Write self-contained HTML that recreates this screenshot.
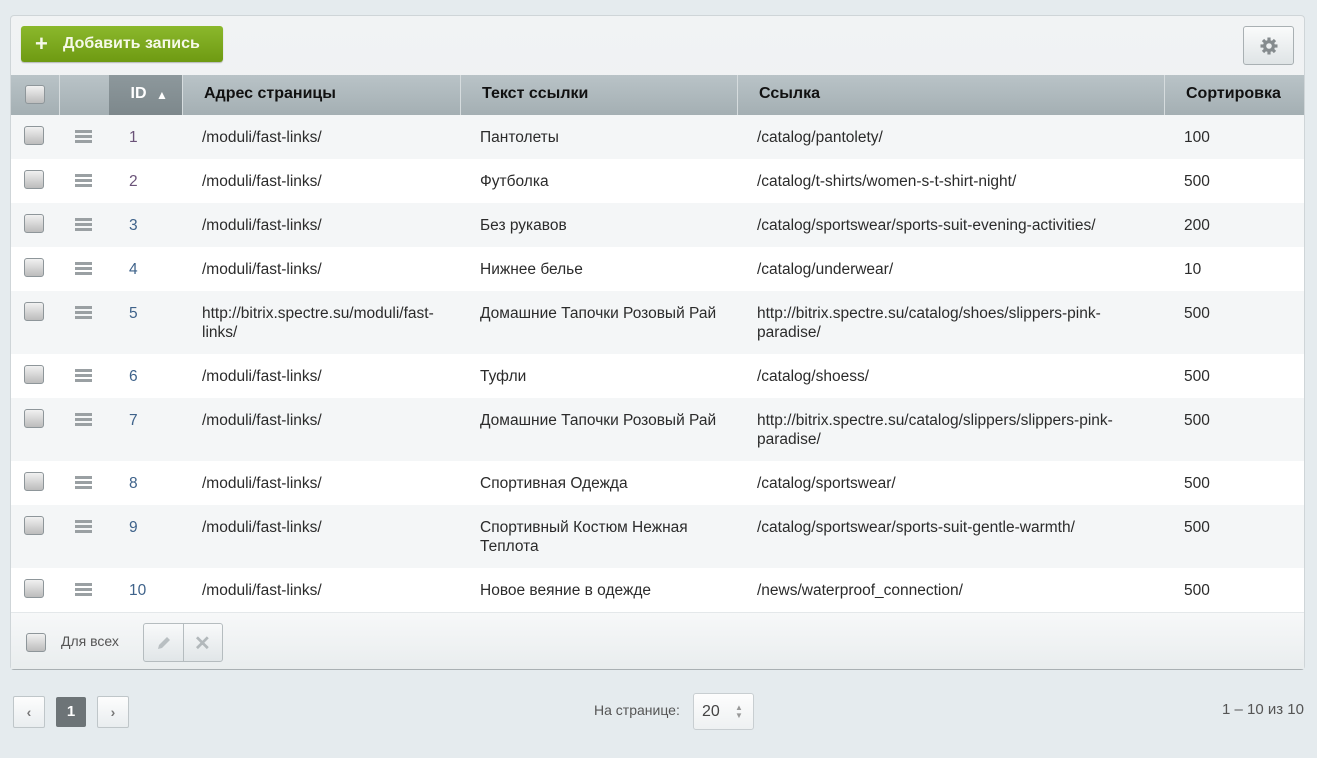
<!DOCTYPE html>
<html><head><meta charset="utf-8"><style>
*{box-sizing:border-box;margin:0;padding:0}
body{width:1317px;height:758px;background:#e5ebee;font-family:"Liberation Sans",Arial,sans-serif;position:relative;overflow:hidden;color:#2b2b2b}
.panel{position:absolute;left:10px;top:15px;width:1295px;height:655px;background:linear-gradient(#f1f3f4,#e6eaec);border:1px solid #cfd5d8;border-bottom-color:#a9b0b3;border-radius:4px}
.add{position:absolute;left:21px;top:26px;width:202px;height:36px;border-radius:3px;background:linear-gradient(#8bb82c,#6e9a12);box-shadow:0 1px 1px rgba(0,0,0,.25);color:#f6f9e8;font-weight:bold;font-size:16px;line-height:36px}
.add .p{position:absolute;left:14px;top:0;font-size:22px}
.add .t{position:absolute;left:42px}
.gear{position:absolute;left:1243px;top:26px;width:51px;height:39px;border:1px solid #a9b0b3;border-radius:3px;background:linear-gradient(#fafbfb,#dfe4e6)}
.hdr{position:absolute;left:11px;top:75px;width:1293px;height:40px;background:linear-gradient(#b9c3c7,#a4afb3)}
.hc{position:absolute;top:0;height:40px;border-left:1px solid #d6dcde;font-weight:bold;font-size:16px;line-height:38px;color:#111}
.row{position:absolute;left:11px;width:1293px;font-size:15.5px;line-height:19px}
.row div{position:absolute;top:13px}
.cb{position:absolute;width:20px;height:19px;border:1px solid #8e969a;border-radius:3px;background:linear-gradient(#f1f1f1,#bcbcbc)}
.burg{position:absolute;width:17px;height:13px;border-top:3px solid #9aa0a3;border-bottom:3px solid #9aa0a3}
.burg:after{content:"";position:absolute;left:0;right:0;top:2px;height:3px;background:#9aa0a3}
.id{color:#3e628a}
.foot{position:absolute;left:11px;top:612px;width:1293px;height:57px;border-top:1px solid #e4e8ea;background:linear-gradient(#f7f8f9,#e9edee)}
.pg{position:absolute;height:32px;border:1px solid #bfc6c9;border-radius:2px;background:linear-gradient(#fdfdfd,#e9edef);color:#777;text-align:center;line-height:30px;font-size:14px;font-weight:bold}
</style></head><body>
<div class="panel"></div>
<div class="add"><span class="p">+</span><span class="t">Добавить запись</span></div>
<div class="gear"><svg width="51" height="39" viewBox="0 0 51 39"><g transform="translate(25,19)" fill="#858b8e"><circle r="6"/><g><rect x="-1.6" y="-8.5" width="3.2" height="17"/><rect x="-1.6" y="-8.5" width="3.2" height="17" transform="rotate(45)"/><rect x="-1.6" y="-8.5" width="3.2" height="17" transform="rotate(90)"/><rect x="-1.6" y="-8.5" width="3.2" height="17" transform="rotate(135)"/></g><circle r="2.8" fill="#eceff0"/></g></svg></div>
<div class="hdr">
<div class="cb" style="left:14px;top:10px"></div>
<div class="hc" style="left:48px;width:50px"></div>
<div class="hc" style="left:98px;width:73px;background:linear-gradient(#8d989c,#7d888c);color:#fff;text-align:center;border-left:0;padding-right:14px">ID<span style="position:absolute;left:47px;top:1px;font-size:12px">▲</span></div>
<div class="hc" style="left:171px;width:278px;padding-left:21px">Адрес страницы</div>
<div class="hc" style="left:449px;width:277px;padding-left:21px">Текст ссылки</div>
<div class="hc" style="left:726px;width:427px;padding-left:21px">Ссылка</div>
<div class="hc" style="left:1153px;width:140px;padding-left:21px">Сортировка</div>
</div>

<div class="row" style="top:115px;height:44px;background:#f4f6f7"><span class="cb" style="left:13px;top:11px"></span><span class="burg" style="left:64px;top:15px"></span><div class="id" style="left:118px;color:#6a5278">1</div><div style="left:191px">/moduli/fast-links/</div><div style="left:469px">Пантолеты</div><div style="left:746px">/catalog/pantolety/</div><div style="left:1173px">100</div></div>
<div class="row" style="top:159px;height:44px;background:#fff"><span class="cb" style="left:13px;top:11px"></span><span class="burg" style="left:64px;top:15px"></span><div class="id" style="left:118px;color:#6a5278">2</div><div style="left:191px">/moduli/fast-links/</div><div style="left:469px">Футболка</div><div style="left:746px">/catalog/t-shirts/women-s-t-shirt-night/</div><div style="left:1173px">500</div></div>
<div class="row" style="top:203px;height:44px;background:#f4f6f7"><span class="cb" style="left:13px;top:11px"></span><span class="burg" style="left:64px;top:15px"></span><div class="id" style="left:118px">3</div><div style="left:191px">/moduli/fast-links/</div><div style="left:469px">Без рукавов</div><div style="left:746px">/catalog/sportswear/sports-suit-evening-activities/</div><div style="left:1173px">200</div></div>
<div class="row" style="top:247px;height:44px;background:#fff"><span class="cb" style="left:13px;top:11px"></span><span class="burg" style="left:64px;top:15px"></span><div class="id" style="left:118px">4</div><div style="left:191px">/moduli/fast-links/</div><div style="left:469px">Нижнее белье</div><div style="left:746px">/catalog/underwear/</div><div style="left:1173px">10</div></div>
<div class="row" style="top:291px;height:63px;background:#f4f6f7"><span class="cb" style="left:13px;top:11px"></span><span class="burg" style="left:64px;top:15px"></span><div class="id" style="left:118px">5</div><div style="left:191px">http://bitrix.spectre.su/moduli/fast-<br>links/</div><div style="left:469px">Домашние Тапочки Розовый Рай</div><div style="left:746px">http://bitrix.spectre.su/catalog/shoes/slippers-pink-<br>paradise/</div><div style="left:1173px">500</div></div>
<div class="row" style="top:354px;height:44px;background:#fff"><span class="cb" style="left:13px;top:11px"></span><span class="burg" style="left:64px;top:15px"></span><div class="id" style="left:118px">6</div><div style="left:191px">/moduli/fast-links/</div><div style="left:469px">Туфли</div><div style="left:746px">/catalog/shoess/</div><div style="left:1173px">500</div></div>
<div class="row" style="top:398px;height:63px;background:#f4f6f7"><span class="cb" style="left:13px;top:11px"></span><span class="burg" style="left:64px;top:15px"></span><div class="id" style="left:118px">7</div><div style="left:191px">/moduli/fast-links/</div><div style="left:469px">Домашние Тапочки Розовый Рай</div><div style="left:746px">http://bitrix.spectre.su/catalog/slippers/slippers-pink-<br>paradise/</div><div style="left:1173px">500</div></div>
<div class="row" style="top:461px;height:44px;background:#fff"><span class="cb" style="left:13px;top:11px"></span><span class="burg" style="left:64px;top:15px"></span><div class="id" style="left:118px">8</div><div style="left:191px">/moduli/fast-links/</div><div style="left:469px">Спортивная Одежда</div><div style="left:746px">/catalog/sportswear/</div><div style="left:1173px">500</div></div>
<div class="row" style="top:505px;height:63px;background:#f4f6f7"><span class="cb" style="left:13px;top:11px"></span><span class="burg" style="left:64px;top:15px"></span><div class="id" style="left:118px">9</div><div style="left:191px">/moduli/fast-links/</div><div style="left:469px">Спортивный Костюм Нежная<br>Теплота</div><div style="left:746px">/catalog/sportswear/sports-suit-gentle-warmth/</div><div style="left:1173px">500</div></div>
<div class="row" style="top:568px;height:44px;background:#fff"><span class="cb" style="left:13px;top:11px"></span><span class="burg" style="left:64px;top:15px"></span><div class="id" style="left:118px">10</div><div style="left:191px">/moduli/fast-links/</div><div style="left:469px">Новое веяние в одежде</div><div style="left:746px">/news/waterproof_connection/</div><div style="left:1173px">500</div></div>

<div class="foot">
<span class="cb" style="left:15px;top:20px"></span>
<span style="position:absolute;left:50px;top:20px;font-size:14px;color:#555">Для всех</span>
<div style="position:absolute;left:132px;top:10px;width:80px;height:39px;border:1px solid #b5bcbf;border-radius:3px;background:linear-gradient(#f8f9fa,#e1e6e8)">
<div style="position:absolute;left:39px;top:0;width:1px;height:37px;background:#b5bcbf"></div>
<svg style="position:absolute;left:11px;top:10px" width="18" height="18" viewBox="0 0 18 18"><path d="M3 15 L4 11 L12 3 L15 6 L7 14 Z" fill="#b9bfc2"/></svg>
<span style="position:absolute;left:50px;top:7px;font-size:20px;color:#b2b8bb;font-weight:bold">✕</span>
</div>
</div>

<div class="pg" style="left:13px;top:696px;width:32px">‹</div>
<div style="position:absolute;left:56px;top:697px;width:30px;height:30px;background:#6d7477;border-radius:2px;color:#fff;font-weight:bold;font-size:15px;text-align:center;line-height:30px">1</div>
<div class="pg" style="left:97px;top:696px;width:32px">›</div>
<span style="position:absolute;left:594px;top:702px;font-size:14px;color:#555">На странице:</span>
<div style="position:absolute;left:693px;top:693px;width:61px;height:37px;border:1px solid #c8ced1;border-radius:3px;background:linear-gradient(#fdfdfd,#eef1f2);font-size:16px;color:#444;line-height:35px;padding-left:8px">20<span style="position:absolute;left:41px;top:-1px;font-size:8px;color:#999;line-height:8px;padding-top:11px">▲<br>▼</span></div>
<span style="position:absolute;right:13px;top:701px;font-size:15px;color:#555">1 – 10 из 10</span>
</body></html>
